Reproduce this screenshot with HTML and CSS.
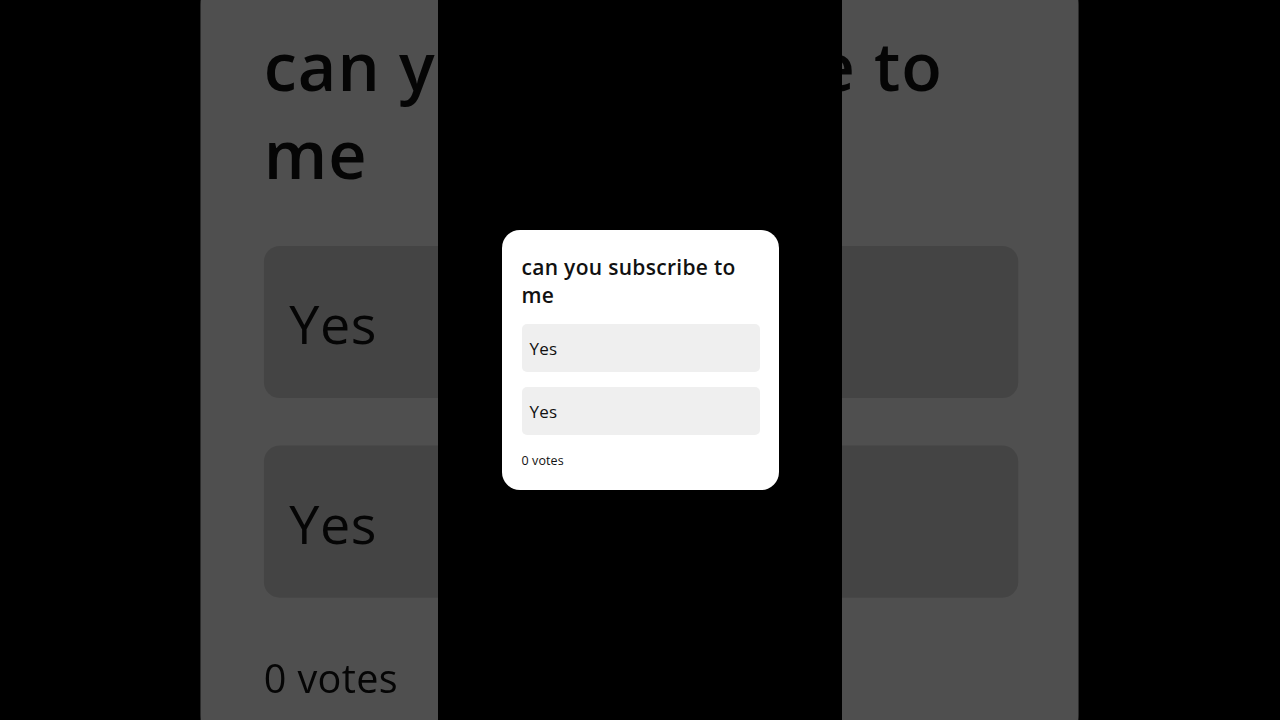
FILE: index.html
```html
<!DOCTYPE html>
<html lang="en">
<head>
<meta charset="utf-8">
<title>Poll</title>
<link rel="stylesheet" href="styles.css">
</head>
<body>
<div class="stage">
  <div class="backdrop" aria-hidden="true">
    <div class="card">
      <h2 class="title">can you subscribe to me</h2>
      <div class="options">
        <div class="option">Yes</div>
        <div class="option">Yes</div>
      </div>
      <p class="votes">0 votes</p>
    </div>
  </div>
  <div class="frame">
    <div class="card">
      <h2 class="title">can you subscribe to me</h2>
      <div class="options">
        <div class="option">Yes</div>
        <div class="option">Yes</div>
      </div>
      <p class="votes">0 votes</p>
    </div>
  </div>
</div>
</body>
</html>
```

FILE: styles.css
```css
html, body {
  margin: 0;
  padding: 0;
  background: #000;
}
body {
  width: 1280px;
  height: 720px;
  overflow: hidden;
  font-family: "Open Sans", "Liberation Sans", sans-serif;
  color: #111;
}
.stage {
  width: 1280px;
  height: 720px;
  display: grid;
  place-items: center;
  overflow: hidden;
}
.backdrop {
  grid-area: 1 / 1;
  z-index: 0;
  transform: translateX(-1px) scale(3.17);
  filter: brightness(0.31);
}
.backdrop .option {
  background: #dcdcdc;
}
.frame {
  grid-area: 1 / 1;
  z-index: 1;
  width: 404px;
  height: 720px;
  background: #000;
  display: grid;
  place-items: center;
}
.card {
  box-sizing: border-box;
  width: 277px;
  padding: 23px 19px 21px 20px;
  background: #fff;
  border-radius: 18px;
}
.title {
  margin: 0 0 15px;
  font-size: 21px;
  line-height: 28px;
  font-weight: 600;
  letter-spacing: 0.3px;
}
.options {
  display: flex;
  flex-direction: column;
  gap: 15px;
}
.option {
  height: 48px;
  display: flex;
  align-items: center;
  padding-left: 8px;
  background: #efefef;
  border-radius: 5px;
  font-size: 17px;
  font-weight: 500;
  letter-spacing: 0.2px;
}
.votes {
  margin: 18px 0 0;
  font-size: 12.5px;
  line-height: 16px;
  font-weight: 500;
  letter-spacing: 0.1px;
}
```
